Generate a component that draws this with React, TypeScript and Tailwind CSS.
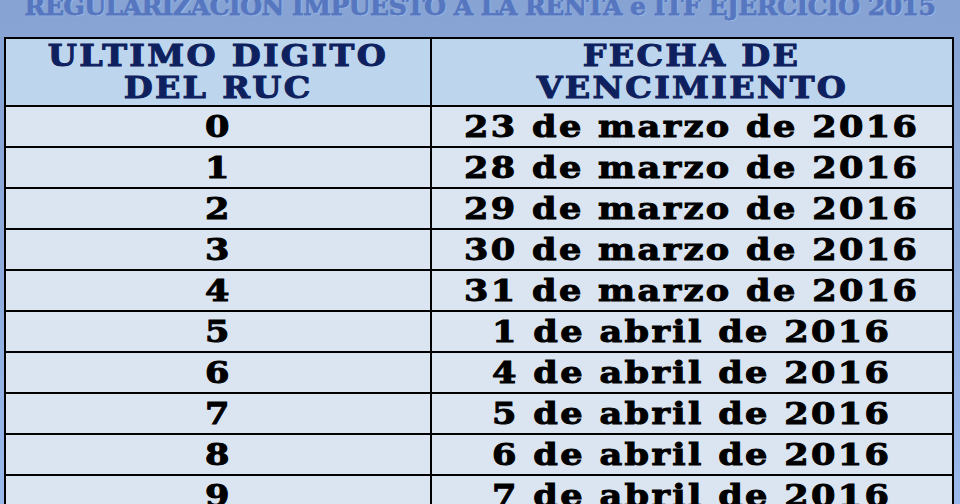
const rows = [
  ["0", "23 de marzo de 2016"],
  ["1", "28 de marzo de 2016"],
  ["2", "29 de marzo de 2016"],
  ["3", "30 de marzo de 2016"],
  ["4", "31 de marzo de 2016"],
  ["5", "1 de abril de 2016"],
  ["6", "4 de abril de 2016"],
  ["7", "5 de abril de 2016"],
  ["8", "6 de abril de 2016"],
  ["9", "7 de abril de 2016"],
];

const headCell =
  "h-[66px] bg-[#bdd6ee] flex flex-col items-center justify-center text-[#0e215e] font-bold text-[29px] leading-[32px] tracking-[2px] [-webkit-text-stroke:1px_#0e215e]";
const bodyCell =
  "h-[39px] bg-[#dbe5f1] flex items-center justify-center text-black font-bold text-[30px] tracking-[2px] [-webkit-text-stroke:1px_#000]";

export default function App() {
  return (
    <main className="w-[960px] h-[504px] overflow-hidden bg-gradient-to-b from-[#87a3d4] via-[#8eabdc] to-[#9ab9ec] font-['DejaVu_Serif',serif]">
      <div className="h-[37px] overflow-hidden flex justify-center">
        <h1 className="-mt-[10px] text-[25px] leading-[34px] font-bold tracking-[-0.5px] text-[#5677c0] [-webkit-text-stroke:0.8px_#5677c0] [text-shadow:1px_1px_1px_#a8c0ea] whitespace-nowrap">
          REGULARIZACION IMPUESTO A LA RENTA e ITF EJERCICIO 2015
        </h1>
      </div>

      <div className="ml-[4px] w-[950px] grid grid-cols-[424px_520px] gap-[2px] p-[2px] pb-0 bg-black">
        <div className={headCell}>
          <span className="inline-block scale-x-[1.15]">ULTIMO DIGITO</span>
          <span className="inline-block scale-x-[1.15]">DEL RUC</span>
        </div>
        <div className={headCell}>
          <span className="inline-block scale-x-[1.15]">FECHA DE</span>
          <span className="inline-block scale-x-[1.15]">VENCIMIENTO</span>
        </div>
        {rows.map(([digit, date]) => (
          <>
            <div key={digit} className={bodyCell}>
              <span className="inline-block scale-x-[1.17]">{digit}</span>
            </div>
            <div key={date} className={bodyCell}>
              <span className="inline-block scale-x-[1.17]">{date}</span>
            </div>
          </>
        ))}
      </div>
    </main>
  );
}
